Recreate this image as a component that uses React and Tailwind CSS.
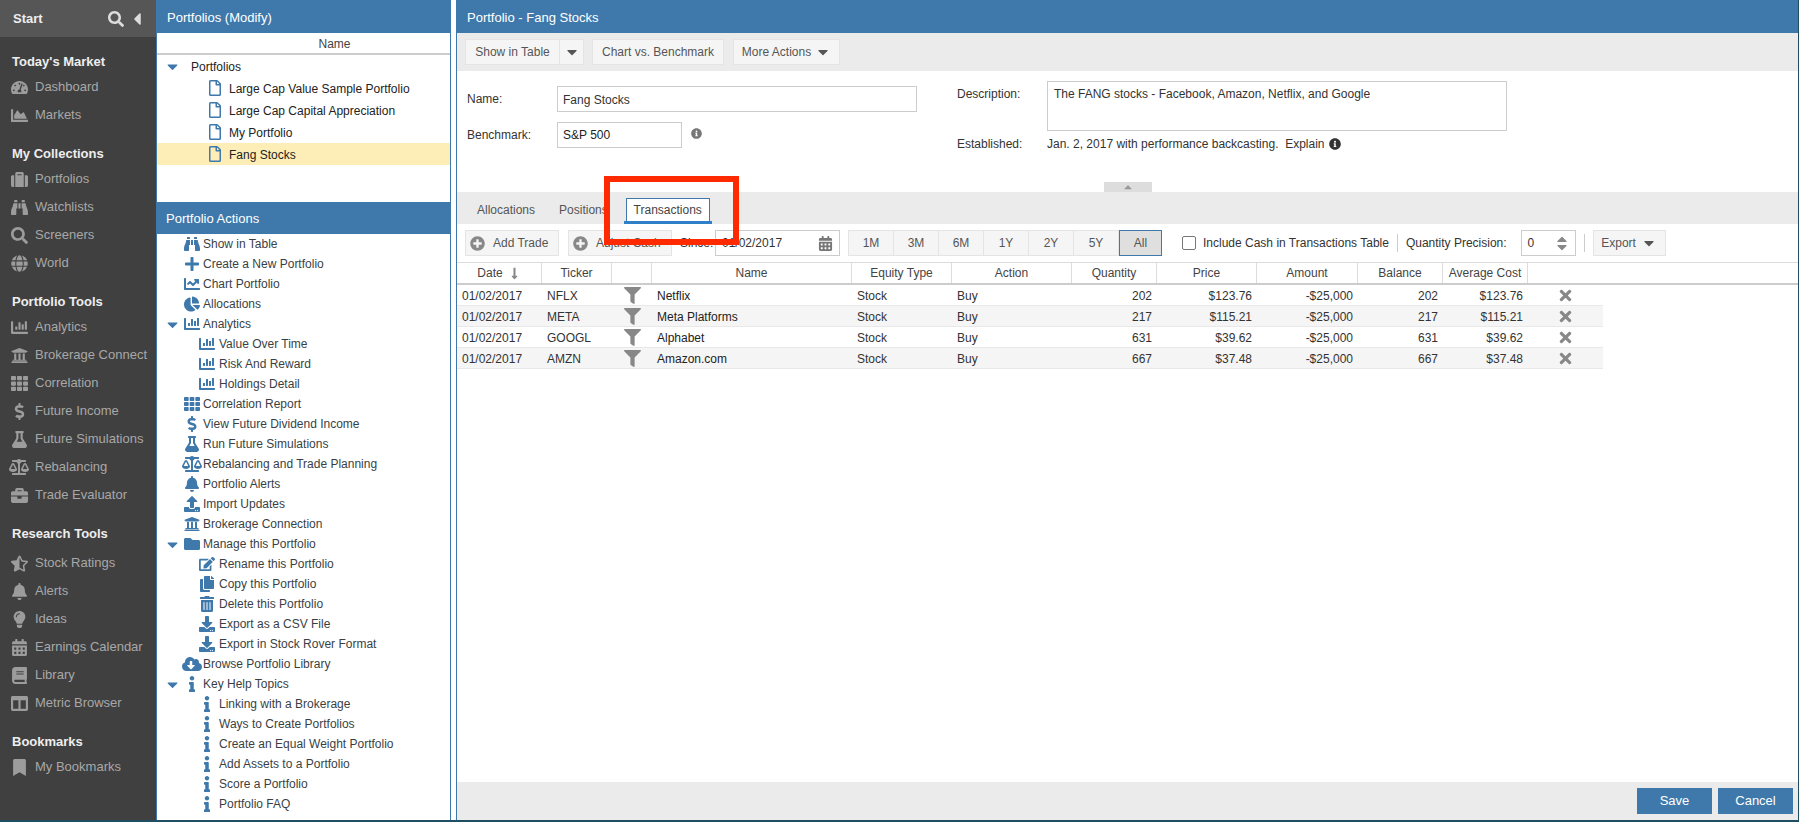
import {
  FaSearch, FaCaretLeft, FaCaretDown, FaCaretUp, FaTachometerAlt, FaChartArea, FaSuitcase, FaBinoculars, FaGlobe,
  FaChartBar, FaUniversity, FaTh, FaDollarSign, FaFlask, FaBalanceScale, FaBriefcase, FaStarHalfAlt, FaBell,
  FaLightbulb, FaCalendarAlt, FaBook, FaColumns, FaBookmark, FaRegFile, FaPlus, FaChartLine, FaChartPie, FaUpload,
  FaFolder, FaEdit, FaCopy, FaTrashAlt, FaDownload, FaCloudDownloadAlt, FaInfo, FaInfoCircle, FaPlusCircle,
  FaLongArrowAltDown, FaFilter, FaTimes,
} from "react-icons/fa";

const sidebar = [
  {
    title: "Today's Market",
    items: [
      ["Dashboard", FaTachometerAlt],
      ["Markets", FaChartArea],
    ],
  },
  {
    title: "My Collections",
    items: [
      ["Portfolios", FaSuitcase],
      ["Watchlists", FaBinoculars],
      ["Screeners", FaSearch],
      ["World", FaGlobe],
    ],
  },
  {
    title: "Portfolio Tools",
    items: [
      ["Analytics", FaChartBar],
      ["Brokerage Connect", FaUniversity],
      ["Correlation", FaTh],
      ["Future Income", FaDollarSign],
      ["Future Simulations", FaFlask],
      ["Rebalancing", FaBalanceScale],
      ["Trade Evaluator", FaBriefcase],
    ],
  },
  {
    title: "Research Tools",
    gap: true,
    items: [
      ["Stock Ratings", FaStarHalfAlt],
      ["Alerts", FaBell],
      ["Ideas", FaLightbulb],
      ["Earnings Calendar", FaCalendarAlt],
      ["Library", FaBook],
      ["Metric Browser", FaColumns],
    ],
  },
  {
    title: "Bookmarks",
    items: [["My Bookmarks", FaBookmark]],
  },
];

const actions = [
  ["Show in Table", FaBinoculars, 1],
  ["Create a New Portfolio", FaPlus, 1],
  ["Chart Portfolio", FaChartLine, 1],
  ["Allocations", FaChartPie, 1],
  ["Analytics", FaChartBar, 1, true],
  ["Value Over Time", FaChartBar, 2],
  ["Risk And Reward", FaChartBar, 2],
  ["Holdings Detail", FaChartBar, 2],
  ["Correlation Report", FaTh, 1],
  ["View Future Dividend Income", FaDollarSign, 1],
  ["Run Future Simulations", FaFlask, 1],
  ["Rebalancing and Trade Planning", FaBalanceScale, 1],
  ["Portfolio Alerts", FaBell, 1],
  ["Import Updates", FaUpload, 1],
  ["Brokerage Connection", FaUniversity, 1],
  ["Manage this Portfolio", FaFolder, 1, true],
  ["Rename this Portfolio", FaEdit, 2],
  ["Copy this Portfolio", FaCopy, 2],
  ["Delete this Portfolio", FaTrashAlt, 2],
  ["Export as a CSV File", FaDownload, 2],
  ["Export in Stock Rover Format", FaDownload, 2],
  ["Browse Portfolio Library", FaCloudDownloadAlt, 1],
  ["Key Help Topics", FaInfo, 1, true],
  ["Linking with a Brokerage", FaInfo, 2],
  ["Ways to Create Portfolios", FaInfo, 2],
  ["Create an Equal Weight Portfolio", FaInfo, 2],
  ["Add Assets to a Portfolio", FaInfo, 2],
  ["Score a Portfolio", FaInfo, 2],
  ["Portfolio FAQ", FaInfo, 2],
];

const rows = [
  ["NFLX", "Netflix", "202", "$123.76"],
  ["META", "Meta Platforms", "217", "$115.21"],
  ["GOOGL", "Alphabet", "631", "$39.62"],
  ["AMZN", "Amazon.com", "667", "$37.48"],
];

const wideIcons = [FaBalanceScale, FaCloudDownloadAlt];

function Btn({ children, className = "" }) {
  return (
    <div className={"flex h-[26px] items-center border border-[#e4e4e4] bg-[#f5f5f5] text-[#555] " + className}>
      {children}
    </div>
  );
}

function Head({ children, className = "" }) {
  return (
    <div className={"flex items-center justify-center border-r border-[#dcdcdc] text-[#444] " + className}>
      {children}
    </div>
  );
}

export default function App() {
  return (
    <div className="relative flex h-[822px] w-[1799px] overflow-hidden border-b-2 border-[#1f4e63] bg-white font-['Liberation_Sans',Arial,sans-serif] text-[12px] text-[#333]">
      {/* SIDEBAR */}
      <div className="w-[157px] shrink-0 border-r border-[#3f79ac] bg-[#404040]">
        <div className="flex h-[37px] items-center bg-[#565656] pl-[13px] pr-[9px] text-white">
          <span className="text-[13px] font-bold text-[#eee]">Start</span>
          <FaSearch className="ml-auto text-[16px] text-[#ddd]" />
          <FaCaretLeft className="ml-[3px] text-[20px] text-[#ddd]" />
        </div>
        <div className="pt-[14px]">
          {sidebar.map((s) => (
            <div key={s.title} className="mb-[14px]">
              <div className={"flex h-[22px] items-center pl-[12px] text-[13px] font-bold text-[#eee] " + (s.gap ? "mb-1" : "")}>
                {s.title}
              </div>
              {s.items.map(([label, Icon]) => (
                <div key={label} className="flex h-[28px] items-center text-[13px] text-[#a8a8a8]">
                  <span className="flex w-[35px] justify-center pl-[3px]">
                    <Icon className={(Icon === FaBalanceScale ? "text-[20px]" : "text-[17px]") + " text-[#9c9c9c]"} />
                  </span>
                  {label}
                </div>
              ))}
            </div>
          ))}
        </div>
      </div>

      {/* MIDDLE COLUMN */}
      <div className="flex w-[294px] shrink-0 flex-col border-r border-[#3f79ac]">
        <div className="flex h-[33px] items-center bg-[#3f79ac] pl-[10px] pt-[2px] text-[13px] text-white">Portfolios (Modify)</div>
        <div className="flex h-[22px] items-center justify-center border-b-2 border-[#ccc] pl-[62px] pt-[2px] text-[#444]">Name</div>
        <div className="h-[147px]">
          <div className="flex h-[22px] items-center">
            <FaCaretDown className="ml-[7px] text-[17px] text-[#3f79ac]" />
            <span className="ml-[10px] pt-[2px] text-[#222]">Portfolios</span>
          </div>
          {["Large Cap Value Sample Portfolio", "Large Cap Capital Appreciation", "My Portfolio", "Fang Stocks"].map((p) => (
            <div key={p} className={"flex h-[22px] items-center " + (p === "Fang Stocks" ? "bg-[#fdeeb8]" : "")}>
              <FaRegFile className="ml-[50px] text-[16px] text-[#3f79ac]" />
              <span className="ml-[6px] pt-[2px] text-[#222]">{p}</span>
            </div>
          ))}
        </div>
        <div className="flex h-[32px] items-center bg-[#3f79ac] pl-[9px] pt-[2px] text-[13px] text-white">Portfolio Actions</div>
        <div>
          {actions.map(([label, Icon, level, open]) => (
            <div key={label} className="flex h-[20px] items-center">
              <span className="w-[24px] pl-[7px]">
                {open && <FaCaretDown className="text-[17px] text-[#3f79ac]" />}
              </span>
              <span className={"flex justify-center " + (level === 2 ? "ml-[14px] w-[24px]" : "w-[22px]")}>
                <Icon className={(wideIcons.includes(Icon) ? "text-[20px]" : "text-[16px]") + " text-[#3f79ac]"} />
              </span>
              <span className="text-[#3a3f45]">{label}</span>
            </div>
          ))}
        </div>
      </div>

      {/* MAIN PANEL */}
      <div className="ml-[5px] flex min-w-0 flex-1 flex-col border-x border-[#3f79ac] border-r-[#1f4e63]">
        <div className="flex h-[33px] shrink-0 items-center bg-[#3f79ac] pl-[10px] pt-[2px] text-[13px] text-white">Portfolio - Fang Stocks</div>

        <div className="flex h-[38px] shrink-0 items-center bg-[#ebebeb] pl-[8px]">
          <Btn className="w-[119px]">
            <span className="flex h-full w-[94px] items-center justify-center border-r border-[#e4e4e4]">Show in Table</span>
            <FaCaretDown className="ml-[4px] text-[16px] text-[#555]" />
          </Btn>
          <Btn className="ml-[8px] w-[132px] justify-center">Chart vs. Benchmark</Btn>
          <Btn className="ml-[9px] w-[107px] justify-center gap-[4px]">
            More Actions <FaCaretDown className="text-[16px] text-[#555]" />
          </Btn>
        </div>

        {/* FORM */}
        <div className="flex h-[121px] shrink-0 flex-col">
          <div className="flex flex-1">
            <div className="w-[500px] shrink-0 pl-[10px] pt-[15px]">
              <div className="flex h-[26px] items-center">
                <span className="w-[90px]">Name:</span>
                <div className="flex h-[26px] w-[360px] items-center border border-[#ccc] pl-[5px] pt-[2px]">Fang Stocks</div>
              </div>
              <div className="mt-[10px] flex h-[26px] items-center">
                <span className="w-[90px]">Benchmark:</span>
                <div className="flex h-[26px] w-[125px] items-center border border-[#ccc] pl-[5px] text-[#222]">S&amp;P 500</div>
                <FaInfoCircle className="mb-[3px] ml-[9px] text-[11px] text-[#777]" />
              </div>
            </div>
            <div className="pt-[10px]">
              <div className="flex">
                <span className="w-[90px] pt-[4px]">Description:</span>
                <div className="h-[50px] w-[460px] border border-[#ccc] pl-[6px] pt-[3px]">The FANG stocks - Facebook, Amazon, Netflix, and Google</div>
              </div>
              <div className="mt-[4px] flex items-center">
                <span className="w-[90px]">Established:</span>
                <span className="whitespace-pre">Jan. 2, 2017 with performance backcasting.  Explain</span>
                <FaInfoCircle className="ml-[4px] text-[12px] text-[#333]" />
              </div>
            </div>
          </div>
          <div className="flex h-[10px] w-[48px] items-center justify-center self-center bg-[#ddd]">
            <FaCaretUp className="text-[12px] text-[#999]" />
          </div>
        </div>

        {/* TABS */}
        <div className="flex h-[32px] shrink-0 items-start bg-[#ebebeb] pl-[20px]">
          <span className="mt-[9px] text-[#555]">Allocations</span>
          <span className="ml-[24px] mt-[9px] text-[#555]">Positions</span>
          <div className="ml-[16px] mt-[6px] border-b-[3px] border-[#2f80c8] px-[2px]">
            <div className="flex h-[23px] w-[84px] items-center justify-center border border-b-0 border-[#3f79ac] bg-white text-[#444]">Transactions</div>
          </div>
        </div>

        {/* TOOLBAR */}
        <div className="flex h-[38px] shrink-0 items-center pl-[8px]">
          <Btn className="w-[94px]">
            <FaPlusCircle className="ml-[4px] text-[15px] text-[#888]" />
            <span className="ml-[8px]">Add Trade</span>
          </Btn>
          <Btn className="ml-[9px] w-[104px]">
            <FaPlusCircle className="ml-[4px] text-[15px] text-[#888]" />
            <span className="ml-[8px]">Adjust Cash</span>
          </Btn>
          <span className="ml-[8px] w-[36px]">Since:</span>
          <div className="-ml-px flex h-[26px] w-[125px] items-center border border-[#ccc] pl-[6px]">
            01/02/2017
            <FaCalendarAlt className="ml-auto mr-[6px] text-[15px] text-[#777]" />
          </div>
          <div className="ml-[8px] flex h-[26px] w-[314px] border border-[#e4e4e4] bg-[#f5f5f5] text-[#555]">
            {["1M", "3M", "6M", "1Y", "2Y", "5Y"].map((t) => (
              <span key={t} className="flex w-[45px] items-center justify-center border-r border-[#e4e4e4]">{t}</span>
            ))}
            <span className="-my-px -mr-px flex flex-1 items-center justify-center border border-[#3f79ac] bg-[#dfdfdf]">All</span>
          </div>
          <span className="ml-[20px] h-[14px] w-[14px] rounded-[2px] border border-[#777] bg-white"></span>
          <span className="ml-[7px]">Include Cash in Transactions Table</span>
          <span className="ml-[8px] h-[18px] w-px bg-[#ccc]"></span>
          <span className="ml-[8px]">Quantity Precision:</span>
          <div className="ml-[14px] flex h-[26px] w-[55px] items-center border border-[#ccc] pl-[6px]">
            0
            <span className="ml-auto mr-[5px] flex flex-col text-[#888]">
              <FaCaretUp className="-mb-[4px] text-[16px]" />
              <FaCaretDown className="-mt-[4px] text-[16px]" />
            </span>
          </div>
          <span className="ml-[8px] h-[18px] w-px bg-[#ccc]"></span>
          <Btn className="ml-[8px] w-[73px] justify-center gap-[5px]">
            Export <FaCaretDown className="text-[16px] text-[#555]" />
          </Btn>
        </div>

        {/* TABLE */}
        <div className="flex h-[23px] shrink-0 border-y border-[#dcdcdc] border-b-2 border-b-[#ccc]">
          <Head className="w-[85px] gap-[5px]">Date <FaLongArrowAltDown className="text-[13px] text-[#888]" /></Head>
          <Head className="w-[70px]">Ticker</Head>
          <Head className="w-[40px]"></Head>
          <Head className="w-[200px]">Name</Head>
          <Head className="w-[100px]">Equity Type</Head>
          <Head className="w-[120px]">Action</Head>
          <Head className="w-[85px]">Quantity</Head>
          <Head className="w-[100px]">Price</Head>
          <Head className="w-[101px]">Amount</Head>
          <Head className="w-[85px]">Balance</Head>
          <Head className="w-[85px]">Average Cost</Head>
        </div>
        <div className="flex-1">
          {rows.map(([ticker, name, qty, price], i) => (
            <div key={ticker} className={"flex h-[21px] w-[1146px] items-center border-b border-[#e8e8e8] pt-px " + (i % 2 ? "bg-[#f5f5f5]" : "bg-white")}>
              <span className="w-[85px] pl-[5px]">01/02/2017</span>
              <span className="w-[70px] pl-[5px]">{ticker}</span>
              <span className="flex w-[40px] justify-center">
                <FaFilter className="text-[17px] text-[#888]" />
              </span>
              <span className="w-[200px] pl-[5px] text-[#222]">{name}</span>
              <span className="w-[100px] pl-[5px]">Stock</span>
              <span className="w-[120px] pl-[5px]">Buy</span>
              <span className="w-[85px] pr-[5px] text-right">{qty}</span>
              <span className="w-[100px] pr-[5px] text-right">{price}</span>
              <span className="w-[101px] pr-[5px] text-right">-$25,000</span>
              <span className="w-[85px] pr-[5px] text-right">{qty}</span>
              <span className="w-[85px] pr-[5px] text-right">{price}</span>
              <span className="flex w-[75px] justify-center">
                <FaTimes className="text-[17px] text-[#888]" />
              </span>
            </div>
          ))}
        </div>

        {/* FOOTER */}
        <div className="flex h-[38px] shrink-0 items-center justify-end gap-[6px] bg-[#ebebeb] pr-[5px]">
          <button className="h-[26px] w-[75px] bg-[#3f79ac] text-[13px] text-white">Save</button>
          <button className="h-[26px] w-[75px] bg-[#3f79ac] text-[13px] text-white">Cancel</button>
        </div>
      </div>

      {/* ANNOTATION */}
      <div className="absolute left-[604px] top-[176px] h-[69px] w-[135px] border-[6px] border-[#ff2a00]"></div>
    </div>
  );
}
